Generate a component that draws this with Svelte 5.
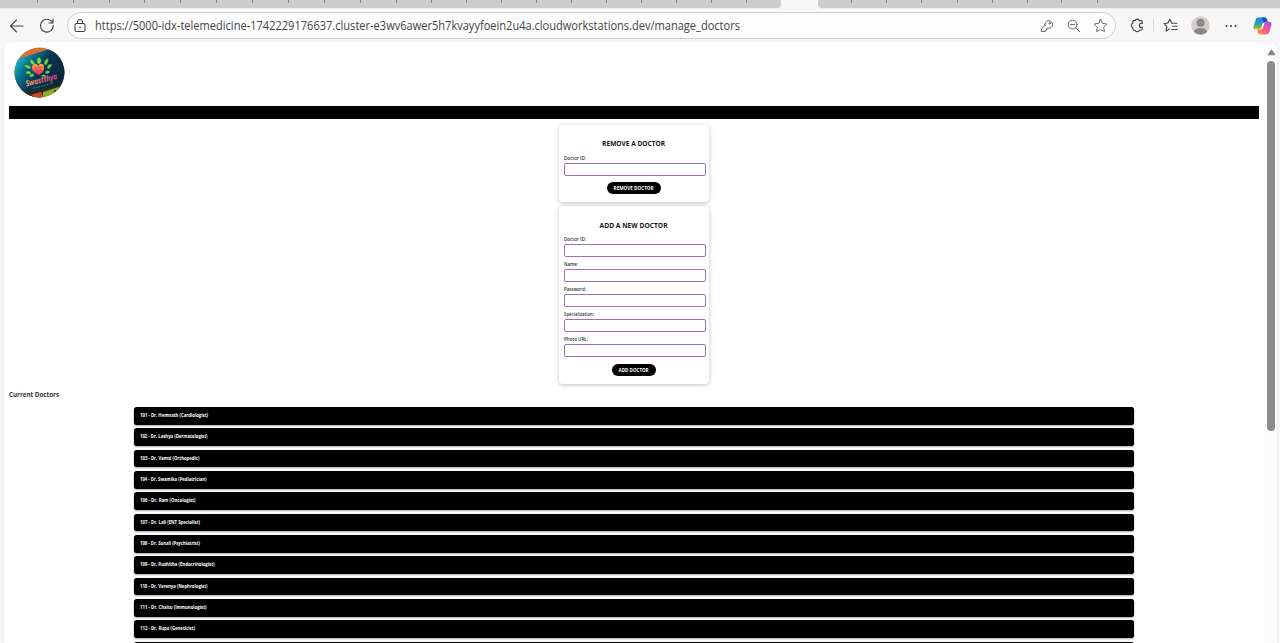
<script>
  const leftTicks = [37, 73, 109, 144, 180, 216, 252, 288, 324, 360, 396, 431, 466, 501, 536, 571, 606, 641, 676, 711, 746];
  const rightTicks = [851, 886, 921, 957, 992, 1027, 1061, 1097];
  const fields = [
    { label: 'Doctor ID:', width: 22 },
    { label: 'Name:', width: 14 },
    { label: 'Password:', width: 22 },
    { label: 'Specialization:', width: 30 },
    { label: 'Photo URL:', width: 24 }
  ];
  const doctors = [
    { text: '101 - Dr. Hemnath (Cardiologist)', width: 68 },
    { text: '102 - Dr. Lashya (Dermatologist)', width: 67.5 },
    { text: '103 - Dr. Vamsi (Orthopedic)', width: 59.5 },
    { text: '104 - Dr. Swamika (Pediatrician)', width: 66.5 },
    { text: '106 - Dr. Ram (Oncologist)', width: 55.5 },
    { text: '107 - Dr. Lali (ENT Specialist)', width: 60 },
    { text: '108 - Dr. Sonali (Psychiatrist)', width: 60 },
    { text: '109 - Dr. Rushitha (Endocrinologist)', width: 74.5 },
    { text: '110 - Dr. Varenya (Nephrologist)', width: 67.5 },
    { text: '111 - Dr. Chaitu (Immunologist)', width: 66.5 },
    { text: '112 - Dr. Rupa (Geneticist)', width: 55 },
    { text: '', width: 0 }
  ];

  function fit(node, width) {
    const natural = node.getBoundingClientRect().width;
    if (natural && width) node.style.transform = `scaleX(${width / natural})`;
  }
</script>

<div class="browser">
  <div class="tabs">
    <svg width="1280" height="9" viewBox="0 0 1280 9">
      <path d="M0 0H781V4.3Q781 8.3 777 8.3H0ZM818 0H1280V8.3H822Q818 8.3 818 4.3Z" fill="#cdcdcd" />
      {#each [...leftTicks, ...rightTicks] as x}
        <path d="M{x + 0.5} 0V3" stroke="#868686" />
      {/each}
    </svg>
  </div>

  <div class="toolbar">
    <svg class="back" width="16" height="16" viewBox="0 0 16 16"><path d="M14 8H1.5M7.5 2L1.5 8l6 6" /></svg>
    <svg class="reload" width="16" height="16" viewBox="0 0 16 16"><path d="M14.2 7.4A6.4 6.4 0 1 1 12.4 3.2L14 4.8M14 1v4h-4" /></svg>
    <div class="address">
      <svg class="lock" width="12" height="14" viewBox="0 0 12 14"><rect x="1" y="4.5" width="10" height="8" rx="1.6" /><path d="M3.5 4.5V3a2.5 2.5 0 0 1 5 0v1.5" /><circle cx="6" cy="8.5" r=".8" fill="#333" stroke="none" /></svg>
      <div class="url"><span use:fit={645}>https://5000-idx-telemedicine-1742229176637.cluster-e3wv6awer5h7kvayyfoein2u4a.cloudworkstations.dev/manage_doctors</span></div>
      <svg class="key" width="14" height="14" viewBox="0 0 14 14"><path d="M5 6.4A3.8 3.8 0 1 1 8 9.2L6.7 9.6V11H5.2v1.5H1.4v-2.6L5 6.4Z" /><circle cx="9.6" cy="4.3" r=".7" /></svg>
      <svg class="zoom" width="14" height="14" viewBox="0 0 14 14"><circle cx="5.6" cy="5.6" r="4.4" /><path d="M3.6 5.6h4M8.8 8.8l4 4" /></svg>
      <svg class="star" width="15" height="15" viewBox="0 0 16 16"><path d="M8 1.3l2.1 4.4 4.8.7-3.5 3.4.8 4.8L8 12.3l-4.2 2.3.8-4.8L1.1 6.4l4.8-.7Z" /></svg>
    </div>
    <svg class="puzzle" width="15" height="15" viewBox="0 0 15 15"><path d="M3.2 2.6H5.3a1.9 1.5 0 0 1 3.8 0h1.8q1.4 0 1.4 1.4v1.4h-.9a2 2 0 0 0 0 4h.9v1.4q0 1.4-1.4 1.4H9.1a1.9 1.5 0 0 1-3.8 0H4q-1.2 0-1.2-1.4V9.3a1.5 1.9 0 0 1 0-3.8V3.8q0-1.2.9-1.2Z" /></svg>
    <i class="divider"></i>
    <svg class="favorites" width="16" height="15" viewBox="0 0 16 15"><path d="M8.8 4.9L6.8 1.2 4.9 5 1 5.6l2.8 2.8-.7 4.5L6.4 11M6.8 1.2l2 4.1H14M9.6 8.3h4.7M8.6 11.5h5.7" /></svg>
    <svg class="avatar" width="19" height="19" viewBox="0 0 19 19"><circle cx="9.5" cy="9.5" r="9.3" fill="#d1cecb" stroke="none" /><circle cx="9.5" cy="6.8" r="4" fill="#8b8886" stroke="none" /><path d="M3 16.1C3.3 13.1 6 12 9.5 12s6.2 1.1 6.5 4.1a9.3 9.3 0 0 1-13 0Z" fill="#8b8886" stroke="none" /></svg>
    <svg class="dots" width="12" height="4" viewBox="0 0 12 4"><g fill="#333" stroke="none"><circle cx="1.5" cy="2" r="1" /><circle cx="6" cy="2" r="1" /><circle cx="10.5" cy="2" r="1" /></g></svg>
    <svg class="copilot" width="19" height="18" viewBox="0 0 19 18">
      <defs>
        <linearGradient id="cool" x1="0" y1="0" x2="0" y2="1"><stop offset="0" stop-color="#178be0" /><stop offset=".5" stop-color="#259cc1" /><stop offset=".8" stop-color="#78b846" /><stop offset="1" stop-color="#e8cb1c" /></linearGradient>
        <linearGradient id="warm" x1=".9" y1="0" x2=".1" y2="1"><stop offset="0" stop-color="#9c58e8" /><stop offset=".5" stop-color="#ee5899" /><stop offset="1" stop-color="#ff9138" /></linearGradient>
      </defs>
      <path d="M5.5.6h6.2q1.6 0 2.1 1.7l.8 2.5h-2.3q-1.6 0-2 1.7L8.8 10.8q-.5 1.8-2.1 1.8H2.5Q0 12.6.5 9.4L2.7 2.8Q3.4.6 5.5.6Z" fill="url(#cool)" stroke="none" />
      <path d="M10.5.6h1.3q1.5 0 2 1.7l.8 2.5h-2.3q-1 0-1.5.8L9.6 2.5Q9.2.6 8 .6Z" fill="#164fbd" stroke="none" />
      <path d="M13.3 17.4H7.1q-1.6 0-2.1-1.7l-.8-3.1h2.5q1.6 0 2.1-1.8l1.5-4.3q.4-1.7 2-1.7h4.2q2.4 0 1.9 3.2l-2.2 7.2q-.8 2.2-2.9 2.2Z" fill="url(#warm)" stroke="none" />
      <path d="M9.4 5.9h2.2l-1.9 5.3q-.4 1.4-1.6 1.4H6.7q1.2 0 1.6-1.4Z" fill="#fff" stroke="none" />
    </svg>
  </div>

  <div class="page">
    <main>
      <svg class="logo" width="51" height="51" viewBox="0 0 51 51">
        <defs>
          <clipPath id="disc"><circle cx="25.5" cy="25.5" r="25" /></clipPath>
          <linearGradient id="sea" x1="0" y1=".2" x2=".8" y2=".7"><stop stop-color="#25c6d2" /><stop offset=".3" stop-color="#087390" /><stop offset=".6" stop-color="#083653" /><stop offset="1" stop-color="#09283c" /></linearGradient>
          <linearGradient id="heart" x1="0" y1="0" x2="0" y2="1"><stop stop-color="#ffa645" /><stop offset="1" stop-color="#ee286b" /></linearGradient>
          <linearGradient id="word"><stop stop-color="#ffb05c" /><stop offset=".45" stop-color="#f47b68" /><stop offset="1" stop-color="#e736a0" /></linearGradient>
        </defs>
        <g clip-path="url(#disc)" stroke="none">
          <rect width="51" height="51" fill="#d96f31" />
          <path d="M0 13L34 2.5 51 5v35L18 50 0 44Z" fill="url(#sea)" />
          <path d="M4 47L49 37v3L26 51H10Z" fill="#272b20" />
          <path d="M18 47.5l9-2.5 3 6H17Z" fill="#c94525" />
          <path d="M29 45l19-6-4 10-15 4Z" fill="#83ae27" />
          <g fill="#83d54a" stroke="#176846" stroke-width=".5">
            <path d="M24 17q-3-4 1-7 4 3 1 7ZM19 18q-4-2-3-6 4 1 5 5ZM30 17q0-4 4-6 1 4-2 7ZM16 22q-4 0-6-4 4-1 7 2ZM33 20q1-3 5-3-1 4-4 5ZM17 27q-4 1-6-2 3-2 6 0ZM32 24q3-1 4 1-2 3-5 1ZM20 29q-2 2-5 0 2-3 5-2ZM28 28q3-1 4 1-2 2-5 0Z" />
          </g>
          <path d="M25 28c-4-2-8-5-7-8 1-4 5-4 6-1 2-3 6-3 6 1 1 3-2 6-5 8Z" fill="url(#heart)" />
          <path d="M21 21l7-1M21 24l7-1" stroke="#ba4e3f" stroke-width=".7" />
          <text x="12.5" y="39.5" transform="rotate(-14 12.5 39.5)" fill="url(#word)" textLength="32" lengthAdjust="spacingAndGlyphs">Swastthya</text>
          <path d="M19 41.2l21-5.2" stroke="#25a99e" stroke-width=".7" stroke-dasharray="2 .7" />
          <circle cx="41" cy="44" r="1" fill="#152d23" />
        </g>
      </svg>
      <div class="navbar"></div>

      <section class="card remove">
        <h2><span use:fit={63}>REMOVE A DOCTOR</span></h2>
        <label><span use:fit={22}>Doctor ID:</span><input /></label>
        <button class="wide"><span use:fit={40}>REMOVE DOCTOR</span></button>
      </section>

      <section class="card add">
        <h2><span use:fit={68}>ADD A NEW DOCTOR</span></h2>
        {#each fields as field}
          <label><span use:fit={field.width}>{field.label}</span><input /></label>
        {/each}
        <button><span use:fit={30}>ADD DOCTOR</span></button>
      </section>

      <h3><span use:fit={50}>Current Doctors</span></h3>
      <ul>
        {#each doctors as doctor}
          <li><span use:fit={doctor.width}>{doctor.text}</span></li>
        {/each}
      </ul>
    </main>
    <div class="scrollbar">
      <svg width="9" height="7" viewBox="0 0 9 7"><path d="M4.5.8L8 5.8H1Z" fill="#858585" stroke="#858585" stroke-linejoin="round" /></svg>
      <div class="thumb"></div>
    </div>
  </div>
</div>

<style>
  :global(body) { margin: 0; overflow: hidden; }
  * { box-sizing: border-box; }
  .browser { width: 1280px; height: 643px; overflow: hidden; display: flex; flex-direction: column; background: #f7f7f7; font-family: "Open Sans", "Noto Sans", sans-serif; }
  svg { display: block; flex: none; }
  span { display: inline-block; white-space: nowrap; }
  .tabs { height: 9px; flex: none; }
  .toolbar { height: 33px; flex: none; display: flex; align-items: center; }
  .toolbar svg { fill: none; stroke: #444; stroke-width: 1.1; stroke-linecap: round; stroke-linejoin: round; }
  .toolbar .back { margin-left: 9px; }
  .toolbar .reload { margin-left: 14px; }
  .address { margin-left: 12px; width: 1049px; height: 27px; border: 1px solid #cfcfcf; border-radius: 14px; background: #fdfdfd; display: flex; align-items: center; }
  .lock { margin-left: 6px; }
  .url { margin-left: 9px; width: 945px; font-size: 12.4px; line-height: 18px; color: #444; }
  .url span { transform-origin: left; }
  .toolbar .address .key, .toolbar .address .zoom, .toolbar .address .star { stroke: #666; stroke-width: 1; }
  .zoom { margin-left: 13px; }
  .star { margin-left: 12px; }
  .puzzle { margin-left: 14px; }
  .divider { width: 1px; height: 13px; background: #d8d8d8; margin-left: 8px; }
  .favorites { margin-left: 9px; }
  .avatar { margin-left: 12px; }
  .dots { margin-left: 15px; }
  .copilot { margin-left: 16px; }
  .page { margin-left: 4px; width: 1273px; height: 601px; background: #fff; border-radius: 7px 7px 0 0; box-shadow: 0 0 2px #ddd; display: flex; overflow: hidden; }
  main { width: 1260px; padding: 5px 5px 0; display: flex; flex-direction: column; align-items: center; }
  main > * { flex: none; }
  .logo { align-self: flex-start; margin-left: 5px; }
  .logo text { font: italic 700 8px "Open Sans", sans-serif; }
  .navbar { width: 1250px; height: 13.5px; margin-top: 7.5px; background: #000; }
  .card { width: 150px; padding: 14px 4px 0; border-radius: 4px; box-shadow: 0 1px 4px rgba(0,0,0,.25); display: flex; flex-direction: column; align-items: center; }
  .remove { height: 77px; margin-top: 6px; padding-top: 13.4px; }
  .add { height: 178px; margin-top: 4px; }
  h2 { margin: 0 0 3px; height: 11px; font-size: 6.6px; line-height: 11px; font-weight: 700; color: #151515; }
  .remove h2 { margin-bottom: 3.6px; }
  label { width: 142px; margin-left: 1px; height: 25px; flex: none; color: #233; font-size: 4.7px; font-weight: 600; line-height: 10px; display: flex; flex-direction: column; align-items: flex-start; }
  label span { transform-origin: left; }
  input { width: 142px; height: 13px; padding: 0; flex: none; border: 1px solid #9873b0; border-radius: 2px; background: #fff; outline: none; }
  button { width: 44px; height: 12px; margin-top: 4px; padding: 0; border: 0; border-radius: 6px; background: #000; color: #fff; font: 700 5px/12px "Open Sans", sans-serif; display: flex; justify-content: center; flex: none; }
  button.wide { width: 54px; }
  .add button { margin-top: 5px; }
  h3 { align-self: flex-start; margin: 5px 0 0; height: 12px; font-size: 6.2px; line-height: 12px; color: #333; }
  h3 span, li span { transform-origin: left; }
  ul { list-style: none; margin: 6px 0 0; padding: 0; width: 1000px; display: grid; gap: 3.85px; }
  li { height: 17.5px; padding-left: 6px; background: #000; border-radius: 2.5px; box-shadow: 0 1px 2px rgba(0,0,0,.35); color: #fff; font-size: 5px; font-weight: 700; line-height: 17.5px; }
  .scrollbar { width: 13px; background: #fcfcfc; display: flex; flex-direction: column; align-items: center; padding: 7px 0 0 1px; }
  .thumb { width: 8px; height: 370px; margin-top: 5px; border-radius: 4px; background: #8b8b8b; }
</style>
